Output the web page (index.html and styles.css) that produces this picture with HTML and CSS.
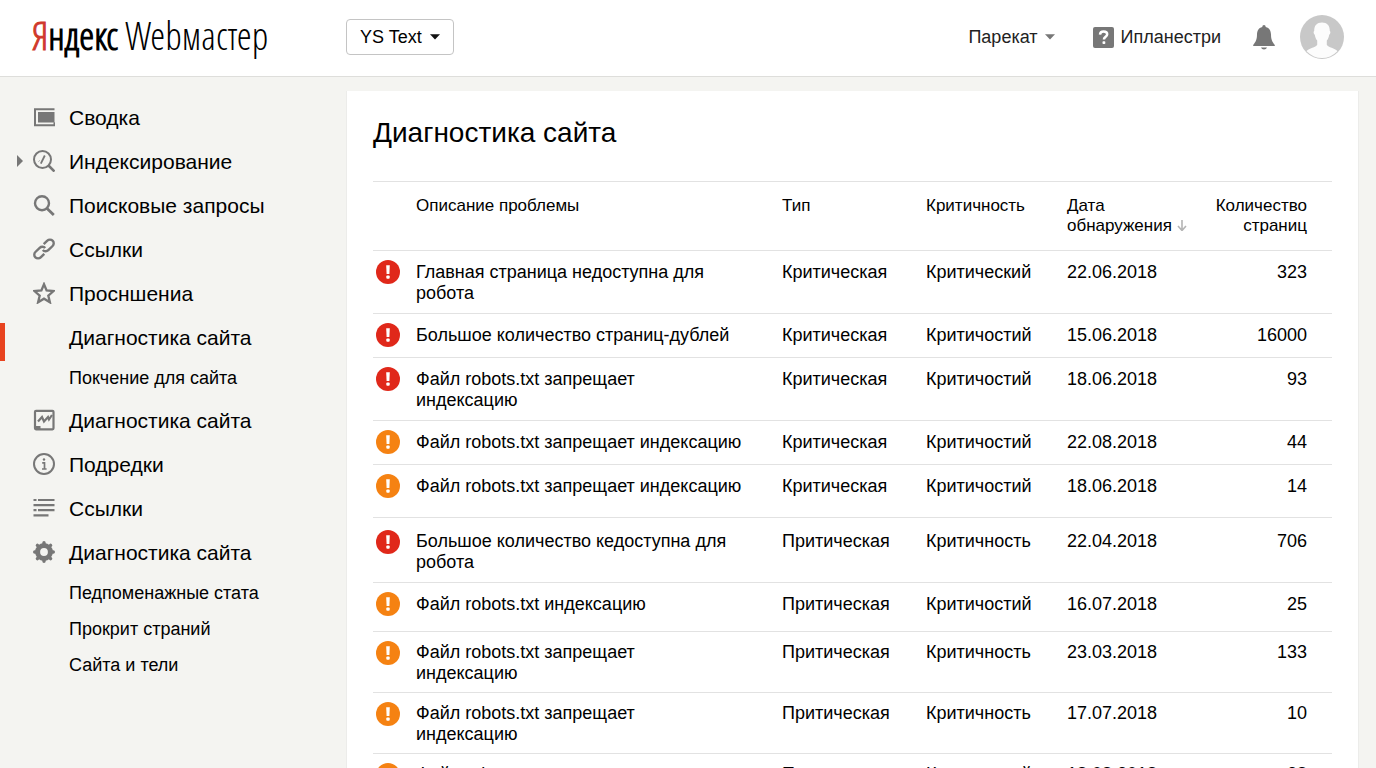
FILE: index.html
```html
<!DOCTYPE html>
<html lang="ru">
<head>
<meta charset="utf-8">
<title>Яндекс Webмастер</title>
<link rel="stylesheet" href="styles.css">
</head>
<body>
<svg class="sprite" aria-hidden="true">
  <symbol id="alert" viewBox="0 0 24 24">
    <circle cx="12" cy="12" r="12" fill="currentColor"/>
    <path d="M10.2 5.2h3.600l-.4 8.800h-2.800z" fill="#fff"/>
    <rect x="10.300" y="15.600" width="3.400" height="3.200" rx="1" fill="#fff"/>
  </symbol>
</svg>
<header class="header">
  <a class="logo" href="#"><span class="logo-accent">Я</span><span class="logo-name">ндекс</span> Webмастер</a>
  <button class="site-button" type="button">YS Text
    <svg width="10" height="6" viewBox="0 0 10 6"><path d="M0 .3h10L5 5.600z" fill="#111"/></svg>
  </button>
  <div class="tools">
    <button class="tool" type="button">Парекат
      <svg width="10" height="6" viewBox="0 0 10 6"><path d="M0 .3h10L5 5.600z" fill="#777"/></svg>
    </button>
    <a class="tool tool-help" href="#">
      <svg width="21" height="21" viewBox="0 0 21 21"><rect width="21" height="21" rx="2" fill="#777"/><path d="M7 7.600C7.100 5.400 8.500 4.400 10.600 4.400c2.200 0 3.600 1.100 3.600 2.900 0 2.300-3.300 2.700-3.300 5.200" fill="none" stroke="#fff" stroke-width="2.500"/><rect x="9.500" y="14.300" width="2.800" height="2.800" rx=".8" fill="#fff"/></svg>
      Ипланестри</a>
    <button class="icon-button bell" type="button" aria-label="Уведомления">
      <svg width="22" height="25" viewBox="0 0 22 25"><path d="M11 0c1 0 1.700.8 1.700 2 3.800 1 5.200 3.900 5.300 7.500.1 5 1 7 3.800 10.500v1H.2v-1C3 16.500 3.900 14.500 4 9.500 4.100 5.900 5.500 3 9.300 2 9.300.8 10 0 11 0z" fill="#777"/><path d="M8 22.500h6c-.5 1.200-1.600 1.900-3 1.900s-2.500-.7-3-1.900z" fill="#777"/></svg>
    </button>
    <button class="icon-button" type="button" aria-label="Профиль">
      <svg width="44" height="44" viewBox="0 0 44 44"><defs><clipPath id="face"><circle cx="22" cy="22" r="21"/></clipPath></defs><circle cx="22" cy="22" r="22" fill="#c8c8c8"/><g clip-path="url(#face)"><path d="M22 7.500c5.200 0 7.900 3.200 7.800 8.500.9.300.8 2.600-.6 3.800-.3 2.600-1.200 4.400-2.400 5.700v4.200c1.500 2.900 7.700 3 11.200 6.800V46H6v-9.500c3.500-3.800 9.700-3.900 11.200-6.800v-4.200c-1.200-1.300-2.100-3.100-2.400-5.700-1.400-1.200-1.500-3.500-.6-3.800C14.100 10.700 16.800 7.500 22 7.500z" fill="#fcfcfc"/></g></svg>
    </button>
  </div>
</header>
<div class="layout">
  <nav class="sidebar" aria-label="Разделы">
    <a class="item" href="#"><svg class="icon" viewBox="0 0 22 22"><path d="M21.500 3.300H2v16h19.500v-3" fill="none" stroke="#777" stroke-width="2"/><rect x="5" y="6" width="16.500" height="10.500" fill="#777"/></svg>Сводка</a>
    <a class="item expandable" href="#"><svg class="icon" viewBox="0 0 22 22"><circle cx="9.500" cy="9.500" r="8.500" fill="none" stroke="#777" stroke-width="2"/><path d="M15.500 15.500l6 6" stroke="#777" stroke-width="2.600"/><path d="M7.800 13.700L11.800 5.500" stroke="#777" stroke-width="1.800"/><path d="M5.500 11.500l1.200-1" stroke="#999"/></svg>Индексирование</a>
    <a class="item" href="#"><svg class="icon" viewBox="0 0 22 22"><circle cx="9" cy="9.200" r="7" fill="none" stroke="#777" stroke-width="2.400"/><path d="M13.800 14.200l7 6.800" stroke="#777" stroke-width="2.800"/></svg>Поисковые запросы</a>
    <a class="item" href="#"><svg class="icon" viewBox="0 0 22 22"><g fill="none" stroke="#777" stroke-width="2.400"><path d="M10.700 6.200l3.600-3.500a3.700 3.700 0 0 1 5.300 0 3.700 3.700 0 0 1 0 5.300l-4.300 4.200a3.700 3.700 0 0 1-5.500-.3"/><path d="M11.300 15.800l-3.600 3.500a3.700 3.700 0 0 1-5.300 0 3.700 3.700 0 0 1 0-5.300l4.300-4.200a3.700 3.700 0 0 1 5.500.3"/></g></svg>Ссылки</a>
    <a class="item" href="#"><svg class="icon" viewBox="0 0 22 22"><path d="M11 2.200l2.600 6.200 7 .6-5.300 4.600 1.600 6.700-5.900-3.600-5.900 3.600 1.600-6.700L1.400 9l7-.6z" fill="none" stroke="#777" stroke-width="2.300"/></svg>Просншениа</a>
    <a class="item active" href="#" aria-current="page"><span class="icon"></span>Диагностика сайта</a>
    <div class="subitems">
      <a class="subitem" href="#">Покчение для сайта</a>
    </div>
    <a class="item" href="#"><svg class="icon" viewBox="0 0 22 22"><rect x="2" y="1.800" width="18.500" height="18.500" rx="1" fill="none" stroke="#777" stroke-width="2.200"/><path d="M2 17h5.500v3H2z" fill="#777"/><path d="M5 12.500l4-4.500 2 4.500 4-4.500 1 2.500 3-4.500" fill="none" stroke="#777" stroke-width="2.200"/></svg>Диагностика сайта</a>
    <a class="item" href="#"><svg class="icon" viewBox="0 0 22 22"><circle cx="11" cy="11" r="10" fill="none" stroke="#777" stroke-width="2"/><path d="M9.200 9.800h2.300v6M9 16h4.600" fill="none" stroke="#777" stroke-width="1.700"/><circle cx="11" cy="6.500" r="1.200" fill="#777"/></svg>Подредки</a>
    <a class="item" href="#"><svg class="icon" viewBox="0 0 22 22"><path d="M.5 3h3M5 3h16.500M.5 8.200h21M.5 13.200h3M5 13.200h16.500M.5 18.300h15" stroke="#777" stroke-width="2.200"/></svg>Ссылки</a>
    <a class="item" href="#"><svg class="icon" viewBox="0 0 22 22"><circle cx="11" cy="11" r="6.400" fill="none" stroke="#777" stroke-width="5"/><path d="M11 1.700v2.500M11 17.800v2.500M1.700 11h2.500M17.800 11h2.500M4.400 4.400l1.800 1.800M15.800 15.800l1.800 1.800M4.400 17.600l1.800-1.800M15.800 6.200l1.800-1.800" stroke="#777" stroke-width="3.400" stroke-linecap="round"/></svg>Диагностика сайта</a>
    <div class="subitems">
      <a class="subitem" href="#">Педпоменажные стата</a>
      <a class="subitem" href="#">Прокрит страний</a>
      <a class="subitem" href="#">Сайта и тели</a>
    </div>
  </nav>
  <main class="panel">
    <h1 class="title">Диагностика сайта</h1>
    <table class="problems">
      <colgroup><col class="col-status"><col class="col-name"><col class="col-type"><col class="col-level"><col class="col-date"><col class="col-count"></colgroup>
      <thead>
        <tr><th aria-label="Статус"></th><th>Описание проблемы</th><th>Тип</th><th>Критичность</th><th>Дата обнаружения <svg width="10" height="12" viewBox="0 0 10 12"><path d="M5 1v10M1 7l4 4.500L9 7" fill="none" stroke="#b4b4b4" stroke-width="1.600"/></svg></th><th class="count">Количество страниц</th></tr>
      </thead>
      <tbody>
        <tr><td class="status fatal"><svg class="mark"><use href="#alert"/></svg></td><td>Главная страница недоступна для<br>робота</td><td>Критическая</td><td>Критический</td><td>22.06.2018</td><td class="count">323</td></tr>
        <tr><td class="status fatal"><svg class="mark"><use href="#alert"/></svg></td><td>Большое количество страниц-дублей</td><td>Критическая</td><td>Критичостий</td><td>15.06.2018</td><td class="count">16000</td></tr>
        <tr><td class="status fatal"><svg class="mark"><use href="#alert"/></svg></td><td>Файл robots.txt запрещает<br>индексацию</td><td>Критическая</td><td>Критичостий</td><td>18.06.2018</td><td class="count">93</td></tr>
        <tr><td class="status warning"><svg class="mark"><use href="#alert"/></svg></td><td>Файл robots.txt запрещает индексацию</td><td>Критическая</td><td>Критичостий</td><td>22.08.2018</td><td class="count">44</td></tr>
        <tr class="group-end"><td class="status warning"><svg class="mark"><use href="#alert"/></svg></td><td>Файл robots.txt запрещает индексацию</td><td>Критическая</td><td>Критичостий</td><td>18.06.2018</td><td class="count">14</td></tr>
        <tr class="group-start"><td class="status fatal"><svg class="mark"><use href="#alert"/></svg></td><td>Большое количество кедоступна для<br>робота</td><td>Притическая</td><td>Критичность</td><td>22.04.2018</td><td class="count">706</td></tr>
        <tr class="roomy"><td class="status warning"><svg class="mark"><use href="#alert"/></svg></td><td>Файл robots.txt индексацию</td><td>Притическая</td><td>Критичостий</td><td>16.07.2018</td><td class="count">25</td></tr>
        <tr class="compact"><td class="status warning"><svg class="mark"><use href="#alert"/></svg></td><td>Файл robots.txt запрещает<br>индексацию</td><td>Притическая</td><td>Критичность</td><td>23.03.2018</td><td class="count">133</td></tr>
        <tr class="compact"><td class="status warning"><svg class="mark"><use href="#alert"/></svg></td><td>Файл robots.txt запрещает<br>индексацию</td><td>Притическая</td><td>Критичность</td><td>17.07.2018</td><td class="count">10</td></tr>
        <tr class="compact"><td class="status warning"><svg class="mark"><use href="#alert"/></svg></td><td>Файл robots.txt запрещает<br>индексацию</td><td>Притическая</td><td>Критичостий</td><td>18.08.2018</td><td class="count">28</td></tr>
      </tbody>
    </table>
  </main>
</div>
</body>
</html>
```
FILE: styles.css
```css
* { box-sizing: border-box; }
body {
  margin: 0;
  background: #f4f4f1;
  color: #000;
  font: 18px/21px "Liberation Sans", Arial, sans-serif;
}
a { color: inherit; text-decoration: none; }
button { font: inherit; color: inherit; cursor: pointer; }
.sprite { display: none; }

.header {
  display: flex;
  align-items: center;
  height: 77px;
  padding: 0 32px 2px;
  background: #fff;
  border-bottom: 1px solid #dededb;
}
.logo {
  flex: 0 0 314px;
  padding-bottom: 4px;
  font-family: "Open Sans Condensed Light", "Open Sans Condensed", "Liberation Sans Narrow", sans-serif;
  font-size: 38px;
  font-weight: 300;
  line-height: 44px;
  white-space: nowrap;
}
.logo-name { font-weight: 700; }
.logo-accent { color: #d0392b; -webkit-text-stroke: 1px #d0392b; }
.site-button {
  display: flex;
  align-items: center;
  gap: 8px;
  height: 36px;
  padding: 0 13px;
  background: #fff;
  border: 1px solid #c4c4c4;
  border-radius: 4px;
}
.tools {
  display: flex;
  align-items: center;
  margin-left: auto;
}
.tool {
  display: flex;
  align-items: center;
  gap: 7px;
  padding: 0;
  border: 0;
  background: none;
  color: #222;
}
.tool-help { margin-left: 38px; }
.icon-button {
  display: flex;
  padding: 0;
  border: 0;
  background: none;
}
.bell { margin: 0 25px 0 32px; }

.layout {
  display: grid;
  grid-template-columns: 346px 1fr;
  padding-right: 17px;
}
.sidebar { padding-top: 18px; }
.item {
  position: relative;
  display: flex;
  align-items: center;
  gap: 14px;
  height: 44px;
  padding-left: 33px;
  font-size: 21px;
}
.icon { flex: none; width: 22px; height: 22px; }
.expandable::before {
  content: "";
  position: absolute;
  left: 17px;
  top: 16px;
  border: 6px solid transparent;
  border-left-color: #777;
  border-right-width: 0;
}
.active::before {
  content: "";
  position: absolute;
  left: 0;
  top: 8px;
  width: 5px;
  height: 38px;
  background: #e8431f;
}
.subitems { padding: 1px 0 2px; }
.subitem {
  display: flex;
  align-items: center;
  height: 36px;
  padding-left: 69px;
}

.panel {
  margin-top: 14px;
  padding: 25px 26px;
  background: #fff;
  border: 1px solid #ececea;
  border-width: 0 1px;
}
.title {
  margin: 0 0 31px;
  font-size: 28px;
  line-height: 34px;
  font-weight: 400;
}
.problems {
  width: 100%;
  table-layout: fixed;
  border-spacing: 0;
}
.col-status { width: 43px; }
.col-name { width: 366px; }
.col-type { width: 144px; }
.col-level { width: 141px; }
.col-date { width: 125px; }
th {
  padding: 14px 0;
  border: solid #e2e2e2;
  border-width: 1px 0;
  font-size: 17px;
  line-height: 20px;
  font-weight: 400;
  text-align: left;
  vertical-align: top;
}
td {
  height: 44px;
  padding: 11px 0 9px;
  border-bottom: 1px solid #e2e2e2;
  vertical-align: top;
}
.count { padding-right: 25px; text-align: right; }
.mark { display: block; width: 24px; height: 24px; }
.fatal { color: #e0281a; }
.warning { color: #f58212; }
.group-end td { height: 53px; }
.group-start td { padding-top: 13px; }
.roomy td { height: 49px; }
.compact td { padding-top: 10px; padding-bottom: 8px; }
.problems .status { padding: 9px 0 0 3px; }
.problems .group-start .status { padding-top: 12px; }
```
